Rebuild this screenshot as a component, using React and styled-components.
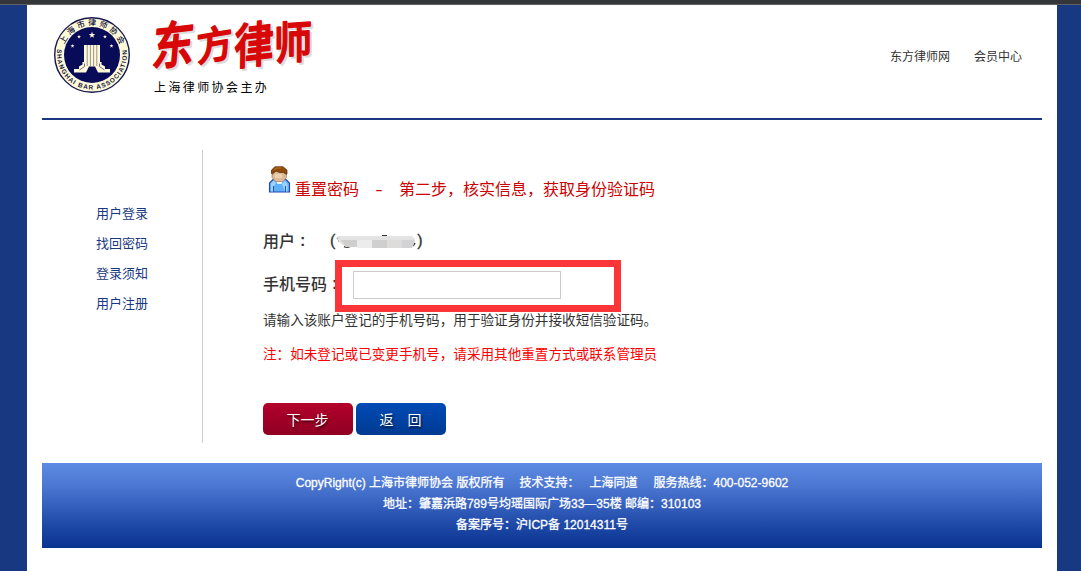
import React from "react";
import styled, { createGlobalStyle } from "styled-components";

const GlobalStyle = createGlobalStyle`
  * { box-sizing: border-box; }
  body {
    margin: 0;
    background: #183882;
    font-family: "Liberation Sans", "Noto Sans CJK SC", sans-serif;
    font-size: 12px;
    color: #333;
    overflow: hidden;
  }
`;

const TopBar = styled.div`
  height: 5px;
  background: #35363a;
  border-bottom: 1px solid #5f6164;
`;

const Page = styled.div`
  width: 1030px;
  height: 566px;
  margin-left: 27px;
  padding: 0 15px;
  background: #fff;
`;

const Header = styled.header`
  display: flex;
  justify-content: space-between;
  height: 115px;
  border-bottom: 2px solid #183882;
`;

const Brand = styled.div`
  display: flex;
  padding: 11px 0 0 11px;
`;

const Title = styled.div`
  margin-left: 15px;
`;

const Wordmark = styled.svg`
  display: block;
  overflow: visible;
`;

const Sponsor = styled.div`
  margin: 3px 0 0 8px;
  font-size: 12px;
  line-height: 18px;
  letter-spacing: 2.4px;
  color: #000;
`;

const TopLinks = styled.nav`
  display: flex;
  gap: 24px;
  padding: 43px 20px 0 0;
`;

const TopLink = styled.a`
  line-height: 18px;
  color: #333;
`;

const Body = styled.main`
  display: flex;
  height: 343px;
  padding-top: 30px;
`;

const Sidebar = styled.aside`
  width: 161px;
  height: 293px;
  padding: 49px 0 0 54px;
  border-right: 1px solid #ccc;
`;

const SideLink = styled.a`
  display: block;
  font-size: 13px;
  line-height: 30px;
  color: #183882;
`;

const Content = styled.section`
  padding: 16px 0 0 60px;
`;

const Heading = styled.h1`
  display: flex;
  height: 36px;
  margin: 0;
  padding-left: 5px;
  font-size: 16px;
  font-weight: 400;
  line-height: 24px;
  color: #c00;
`;

const HeadingText = styled.span`
  padding: 12px 0 0 4px;
`;

const Dash = styled.span`
  display: inline-block;
  width: 40px;
  text-align: center;
  transform: scaleX(1.4);
`;

const Field = styled.div`
  display: flex;
  align-items: center;
  position: relative;
  height: ${(p) => p.$height}px;
  margin-top: ${(p) => p.$top}px;
  font-size: 16px;
  font-weight: 500;
`;

const FieldLabel = styled.span`
  display: flex;
  padding-bottom: ${(p) => p.$lift || 0}px;
`;

const Colon = styled.span`
  width: ${(p) => p.$width}px;
  padding-left: 5px;
  font-family: "Liberation Sans", sans-serif;
  font-weight: 700;
  line-height: 26px;
`;

const Account = styled.span`
  display: flex;
  align-items: center;
  font-family: "Liberation Sans", sans-serif;
  -webkit-text-stroke: 0.3px #333;
`;

const MaskedDigits = styled.svg`
  display: block;
  margin-top: 1px;
`;

const PhoneInput = styled.input`
  width: 208px;
  height: 28px;
  border: 1px solid #ccc;
  outline: none;
  background: #fff;
`;

const Highlight = styled.div`
  position: absolute;
  left: 72px;
  top: -11px;
  width: 286px;
  height: 52px;
  border: 7px solid #fc3638;
`;

const Hint = styled.p`
  margin: ${(p) => p.$top}px 0 0;
  font-size: 13.6px;
  line-height: 22px;
  white-space: nowrap;
  color: ${(p) => p.$color};
`;

const Actions = styled.div`
  display: flex;
  gap: 3px;
  margin-top: 37px;
`;

const Button = styled.button`
  width: 90px;
  height: 32px;
  padding: 0 1px 1px 0;
  border: 0;
  border-radius: 5px;
  background: ${(p) => (p.$primary ? "linear-gradient(#b3002b, #8f0022)" : "linear-gradient(#004ab5, #003a92)")};
  color: #fff;
  font-family: "Noto Sans CJK SC", sans-serif;
  font-size: 14px;
  font-weight: 400;
  white-space: pre;
  word-spacing: 0;
  text-shadow: 1px 2px 2px rgba(0, 0, 0, 0.65);
`;

const Footer = styled.footer`
  height: 85px;
  padding-top: 10px;
  background: linear-gradient(#5d8ae2, #4d79d3 25%, #3560be 50%, #1c47a5 75%, #0a3390);
  color: #fff;
  font-size: 12px;
  font-weight: 400;
  -webkit-text-stroke: 0.3px #fff;
  line-height: 21px;
  text-align: center;
`;

const FooterLine = styled.div`
  height: 21px;
  white-space: pre;
`;

const FooterItem = styled.span`
  margin-right: ${(p) => p.$gap}px;
`;

function Emblem() {
  const star = "M0-3.4 .8-1.1H3.3L1.3.4 2 2.8 0 1.4-2 2.8-1.3.4-3.3-1.1H-.8Z";
  return (
    <svg width="78" height="78" viewBox="0 0 78 78">
      <defs>
        <path id="ring-top" d="M9.5 39a29.5 29.5 0 0 1 59 0" />
        <path id="ring-bottom" d="M7.500 23.200A35 35 0 1 0 70.500 23.200" />
      </defs>
      <circle cx="39" cy="39" r="37.3" fill="#fdf8d8" stroke="#14184e" strokeWidth="1.4" />
      <circle cx="39" cy="39" r="28" fill="#080b57" />
      <text fontFamily="Noto Sans CJK SC" fontSize="8" fontWeight="500" fill="#15163f" letterSpacing="2.6">
        <textPath href="#ring-top" startOffset="51.500%" textAnchor="middle">上海市律师协会</textPath>
      </text>
      <text fontFamily="Liberation Sans" fontSize="6.4" fontWeight="700" fill="#15163f" letterSpacing="1.05">
        <textPath href="#ring-bottom" startOffset="50%" textAnchor="middle">SHANGHAI BAR ASSOCIATION</textPath>
      </text>
      <g fill="#fdf8d8">
        <path d={star} transform="translate(39 19)" />
        <path d={star} transform="translate(26 20.7) scale(.6)" />
        <path d={star} transform="translate(52 20.7) scale(.6)" />
        <path d={star} transform="translate(19.500 30) scale(.6)" />
        <path d={star} transform="translate(58.500 30) scale(.6)" />
        <path d="M31 29h16v17l-1.500 4.500h-13L31 46z" />
        <path d="M31 46h-1.500v2.500L26 50.500V53h-5v3.500h12l3-6zM47 46h1.500v2.500l3.500 2V53h5v3.500H45l-3-6z" />
      </g>
      <path d="M34.200 29v21M37.400 29v21M40.600 29v21M43.800 29v21" stroke="#6c6a72" strokeWidth=".7" />
      <path d="M31.500 47.500v3l-5 3.500M46.500 47.500v3l5 3.500" stroke="#4c4a68" strokeWidth=".8" fill="none" />
      <path d="M36.500 51h5l2 5.500h-9z" fill="#080b57" />
    </svg>
  );
}

function Calligraphy() {
  const glyphs = [
    ["东", "translate(5 50) rotate(-7) skewX(-12) scale(1 1.18)"],
    ["方", "translate(51 46) rotate(-10) skewX(-8) scale(.88 .91)"],
    ["律", "translate(88 49) rotate(-7) skewX(-8) scale(.94 1.14)"],
    ["师", "translate(128 44) rotate(-4) skewX(-4) scale(.91 1.06)"],
  ];
  const draw = (fill) =>
    glyphs.map(([c, t]) => (
      <text key={c} transform={t} fill={fill} stroke={fill} strokeWidth="1.600" strokeLinejoin="round">{c}</text>
    ));
  return (
    <Wordmark width="180" height="60" viewBox="0 0 180 60"
      fontFamily="Noto Sans CJK SC" fontSize="42" fontWeight="500">
      <g transform="translate(2 2)">{draw("#dcdcdc")}</g>
      {draw("#d80808")}
    </Wordmark>
  );
}

function UserIcon() {
  return (
    <svg width="23" height="27" viewBox="0 0 23 27">
      <path d="M1.5 26v-9l4-4h12l4 4v9z" fill="#61aefa" stroke="#2346ae" strokeWidth="1.1" />
      <path d="M3 17 6 14.5l2 3L6 20v5.5H3zM14 18l3-3 2.5 3v7.5H17z" fill="#9bd3ff" />
      <path d="M5.5 20v6M17.5 20v6" stroke="#2457bf" />
      <path d="M7.5 14h8l-2 4h-4z" fill="#e7f1fb" />
      <path d="M4 5h14.5v6.5L15 15.5H7.5L4 11.5z" fill="#dfba94" stroke="#a58264" strokeWidth=".7" />
      <path d="M7 8h7v4H7z" fill="#ecd0b2" />
      <path d="M3.5 7.5V4L7 .7h8L19 4v4h-1.500l-2-1.500h-4L8 5 4.500 8z" fill="#8e4b0c" stroke="#572e0a" strokeWidth=".7" />
      <path d="M6.500 3.500 8.500 2H13" stroke="#bd701c" strokeWidth="1.2" fill="none" />
    </svg>
  );
}

function Mosaic() {
  return (
    <MaskedDigits width="82" height="16" viewBox="0 0 82 16">
      <path d="M2 5 4 3.5v4M9 12.5q4 1.5 7-.5M47 1.700h5M78 12l2-3" stroke="#333" strokeWidth="1.5" fill="none" />
      <path d="M4 2h73l3 3-2 8H11L6 10 2 5z" fill="#e3e3e3" />
      <path d="M6 6h16v7H11z" fill="#d0cecc" />
      <path d="M22 6h15v8H22z" fill="#ececec" />
      <path d="M37 6h15v8H37z" fill="#cfcfcf" />
      <path d="M52 6h15v8H52z" fill="#dedbdb" />
      <path d="M67 6h13l-3 8H67z" fill="#d2d2d5" />
    </MaskedDigits>
  );
}

export default function App() {
  return (
    <>
      <GlobalStyle />
      <TopBar />
      <Page>
        <Header>
          <Brand>
            <Emblem />
            <Title>
              <Calligraphy />
              <Sponsor>上海律师协会主办</Sponsor>
            </Title>
          </Brand>
          <TopLinks>
            <TopLink>东方律师网</TopLink>
            <TopLink>会员中心</TopLink>
          </TopLinks>
        </Header>
        <Body>
          <Sidebar>
            {["用户登录", "找回密码", "登录须知", "用户注册"].map((label) => (
              <SideLink key={label}>{label}</SideLink>
            ))}
          </Sidebar>
          <Content>
            <Heading>
              <UserIcon />
              <HeadingText>
                重置密码<Dash>-</Dash>第二步，核实信息，获取身份验证码
              </HeadingText>
            </Heading>
            <Field $height={24} $top={27}>
              <FieldLabel>用户<Colon $width={35}>:</Colon></FieldLabel>
              <Account>(<Mosaic />)</Account>
            </Field>
            <Field $height={28} $top={18}>
              <FieldLabel $lift={2}>手机号码<Colon $width={26}>:</Colon></FieldLabel>
              <PhoneInput />
              <Highlight />
            </Field>
            <Hint $top={11} $color="#333">请输入该账户登记的手机号码，用于验证身份并接收短信验证码。</Hint>
            <Hint $top={12} $color="#f00">注：如未登记或已变更手机号，请采用其他重置方式或联系管理员</Hint>
            <Actions>
              <Button $primary>下一步</Button>
              <Button>{"返　回"}</Button>
            </Actions>
          </Content>
        </Body>
        <Footer>
          <FooterLine>
            <FooterItem $gap={15}>CopyRight(c) 上海市律师协会 版权所有</FooterItem>
            <FooterItem $gap={10}>技术支持：</FooterItem>
            <FooterItem $gap={16}>上海同道</FooterItem>
            <FooterItem $gap={0}>服务热线：400-052-9602</FooterItem>
          </FooterLine>
          <FooterLine>地址：肇嘉浜路789号均瑶国际广场33—35楼 邮编：310103</FooterLine>
          <FooterLine>备案序号：沪ICP备 12014311号</FooterLine>
        </Footer>
      </Page>
    </>
  );
}
